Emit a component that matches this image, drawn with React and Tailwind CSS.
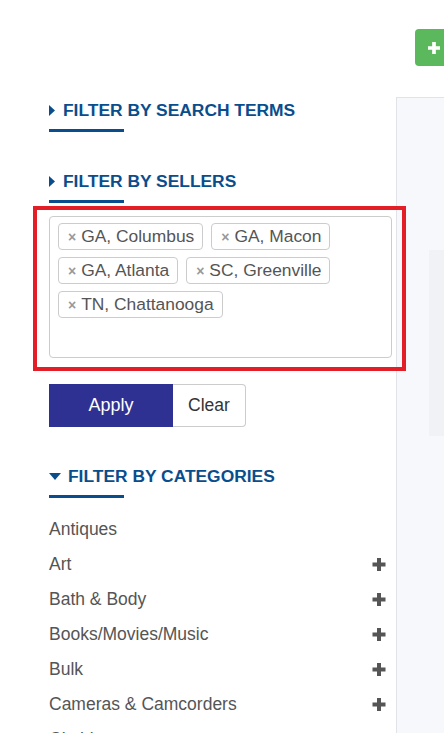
import React from "react";

const font = { fontFamily: '"Liberation Sans", Arial, sans-serif' };

function PlusIcon({ className }) {
  return (
    <svg viewBox="0 0 13 13" className={className}>
      <path d="M4.5 0h4v4.5H13v4H8.5V13h-4V8.5H0v-4h4.5z" fill="currentColor" />
    </svg>
  );
}

function Heading({ title, open }) {
  return (
    <div>
      <div className="flex items-center h-[20px] text-[#0a4d8c] font-bold text-[17.4px] leading-[20px]">
        {open ? (
          <svg viewBox="0 0 12 7" className="w-[12px] h-[7px] mr-[7px]">
            <path d="M0 0h12L6 7z" fill="currentColor" />
          </svg>
        ) : (
          <svg viewBox="0 0 6 11" className="w-[6px] h-[11px] mr-[8px]">
            <path d="M0 0l6 5.5L0 11z" fill="currentColor" />
          </svg>
        )}
        <span>{title}</span>
      </div>
      <div className="mt-[9px] w-[75px] h-[3px] bg-[#0a4d8c]" />
    </div>
  );
}

function Tag({ label }) {
  return (
    <div className="flex items-center h-[27px] pl-[9px] pr-[8px] border border-[#cccccc] rounded-[4px] bg-white text-[#555555] text-[17.4px] leading-none">
      <span className="text-[#999999] font-bold text-[14px] mr-[5px] leading-none">×</span>
      <span>{label}</span>
    </div>
  );
}

const categories = [
  ["Antiques", false],
  ["Art", true],
  ["Bath & Body", true],
  ["Books/Movies/Music", true],
  ["Bulk", true],
  ["Cameras & Camcorders", true],
  ["Clothing", true],
];

export default function App() {
  return (
    <div className="w-[444px] h-[733px] overflow-hidden bg-white" style={font}>
      <div className="h-[97px] pl-[415px] pt-[29px]">
        <div className="w-[60px] h-[37px] bg-[#5cb85c] rounded-[4px] flex items-center pl-[13px] text-white">
          <PlusIcon className="w-[12px] h-[12px]" />
        </div>
      </div>
      <div className="flex h-[636px]">
        <div className="w-[396px] shrink-0 pl-[49px] pr-[4px] pt-[3px]">
          <Heading title="FILTER BY SEARCH TERMS" />
          <div className="mt-[39px]">
            <Heading title="FILTER BY SELLERS" />
          </div>
          <div className="relative mt-[13px]">
            <div className="h-[142px] border border-[#cccccc] rounded-[4px] bg-white pl-[8px] pt-[6px] pr-[8px]">
              <div className="flex flex-wrap gap-x-[8px] gap-y-[7px]">
                <Tag label="GA, Columbus" />
                <Tag label="GA, Macon" />
                <Tag label="GA, Atlanta" />
                <Tag label="SC, Greenville" />
                <Tag label="TN, Chattanooga" />
              </div>
            </div>
            <div className="absolute left-[-16px] top-[-10px] right-[-14px] bottom-[-13px] border-[4px] border-[#e41e26] z-10 pointer-events-none" />
          </div>
          <div className="flex mt-[26px] h-[43px]">
            <div className="w-[124px] h-full bg-[#2e3192] text-white text-[18px] flex items-center justify-center">
              Apply
            </div>
            <div className="w-[73px] h-full border border-l-0 border-[#cccccc] rounded-r-[4px] text-[#333333] text-[17.5px] flex items-center justify-center">
              Clear
            </div>
          </div>
          <div className="mt-[39px]">
            <Heading title="FILTER BY CATEGORIES" open />
          </div>
          <div className="mt-[14px]">
            {categories.map(([name, plus]) => (
              <div key={name} className="h-[35px] flex items-center justify-between pr-[6px] text-[#555555] text-[17.5px]">
                <span>{name}</span>
                {plus && <PlusIcon className="w-[14px] h-[13px] text-[#555555]" />}
              </div>
            ))}
          </div>
        </div>
        <div className="flex-1 bg-[#f7f8fc] border-l border-t border-[#e2e3e9] pl-[32px] pt-[152px]">
          <div className="h-[186px] bg-[#f1f2f6]" />
        </div>
      </div>
    </div>
  );
}
